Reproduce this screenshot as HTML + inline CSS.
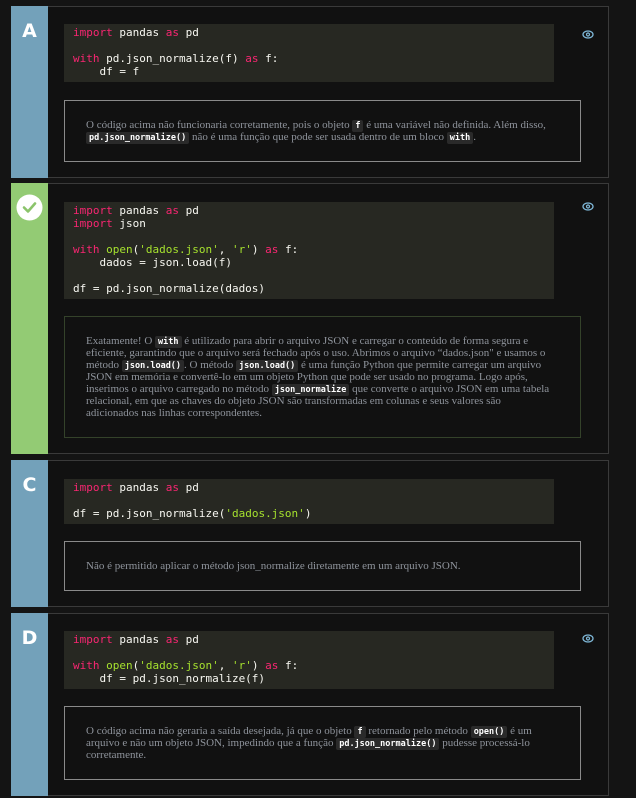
<!DOCTYPE html>
<html><head><meta charset="utf-8"><style>
*{margin:0;padding:0;box-sizing:border-box}
body{width:636px;height:798px;background:#141414;position:relative;overflow:hidden;font-family:"Liberation Serif",serif}
.card{position:absolute;left:11px;width:598px;background:#111;border:1px solid #3a3a3a}
.strip{position:absolute;left:-1px;top:-1px;bottom:-1px;width:37px;background:#73a1ba}
.letter{position:absolute;left:0;width:37px;top:14px;text-align:center;color:#fff;font:bold 19px "DejaVu Sans",sans-serif}
.code{position:absolute;left:52px;width:490px;background:#272822;padding:2px 9px;font:11px/13px "DejaVu Sans Mono","Liberation Mono",monospace;color:#f8f8f2;white-space:pre}
.k{color:#f92672}.s{color:#a6e22e}
.fb{position:absolute;left:52px;width:517px;border:1px solid #8a8a8a;display:flex;align-items:center;padding:0 21px;font-size:11px;line-height:12px;color:#8f949c}
.fb.g{border-color:#34422a;padding-right:30px}
code{font:bold 8.5px "DejaVu Sans Mono",monospace;color:#fff;background:#2a2a2a;padding:1px 3px;border-radius:2px}
.eye{position:absolute;left:570px;width:12px;height:9px}
</style></head><body>

<div class="card" style="top:6px;height:172px">
<div class="strip"><div class="letter">A</div></div>
<div class="code" style="top:17px;height:58px"><span class="k">import</span> pandas <span class="k">as</span> pd

<span class="k">with</span> pd.json_normalize(f) <span class="k">as</span> f:
    df = f</div>
<svg class="eye" style="top:23px" viewBox="0 0 12 9"><ellipse cx="6" cy="4.5" rx="5" ry="3.5" fill="none" stroke="#7fb8d8" stroke-width="1.3"/><circle cx="6" cy="4.5" r="1.5" fill="none" stroke="#7fb8d8" stroke-width="1.2"/></svg>
<div class="fb" style="top:93px;height:62px"><div>O código acima não funcionaria corretamente, pois o objeto <code>f</code> é uma variável não definida. Além disso, <code>pd.json_normalize()</code> não é uma função que pode ser usada dentro de um bloco <code>with</code>.</div></div>
</div>

<div class="card" style="top:183px;height:271px">
<div class="strip" style="background:#93cb74"><svg style="position:absolute;left:5px;top:11px" width="27" height="27" viewBox="0 0 27 27"><circle cx="13.5" cy="13.5" r="13" fill="#fff"/><path d="M8 13.5l4 4 7-8" fill="none" stroke="#8bc46b" stroke-width="2.6" stroke-linecap="round" stroke-linejoin="round"/></svg></div>
<div class="code" style="top:18px;height:97px"><span class="k">import</span> pandas <span class="k">as</span> pd
<span class="k">import</span> json

<span class="k">with</span> <span class="s">open</span>(<span class="s">'dados.json'</span>, <span class="s">'r'</span>) <span class="k">as</span> f:
    dados = json.load(f)

df = pd.json_normalize(dados)</div>
<svg class="eye" style="top:18px" viewBox="0 0 12 9"><ellipse cx="6" cy="4.5" rx="5" ry="3.5" fill="none" stroke="#7fb8d8" stroke-width="1.3"/><circle cx="6" cy="4.5" r="1.5" fill="none" stroke="#7fb8d8" stroke-width="1.2"/></svg>
<div class="fb g" style="top:132px;height:122px"><div>Exatamente! O <code>with</code> é utilizado para abrir o arquivo JSON e carregar o conteúdo de forma segura e eficiente, garantindo que o arquivo será fechado após o uso. Abrimos o arquivo “dados.json" e usamos o método <code>json.load()</code>. O método <code>json.load()</code> é uma função Python que permite carregar um arquivo JSON em memória e convertê-lo em um objeto Python que pode ser usado no programa. Logo após, inserimos o arquivo carregado no método <code>json_normalize</code> que converte o arquivo JSON em uma tabela relacional, em que as chaves do objeto JSON são transformadas em colunas e seus valores são adicionados nas linhas correspondentes.</div></div>
</div>

<div class="card" style="top:460px;height:147px">
<div class="strip"><div class="letter">C</div></div>
<div class="code" style="top:18px;height:45px"><span class="k">import</span> pandas <span class="k">as</span> pd

df = pd.json_normalize(<span class="s">'dados.json'</span>)</div>
<div class="fb" style="top:80px;height:50px"><div>Não é permitido aplicar o método json_normalize diretamente em um arquivo JSON.</div></div>
</div>

<div class="card" style="top:613px;height:183px">
<div class="strip"><div class="letter">D</div></div>
<div class="code" style="top:17px;height:58px"><span class="k">import</span> pandas <span class="k">as</span> pd

<span class="k">with</span> <span class="s">open</span>(<span class="s">'dados.json'</span>, <span class="s">'r'</span>) <span class="k">as</span> f:
    df = pd.json_normalize(f)</div>
<svg class="eye" style="top:20px" viewBox="0 0 12 9"><ellipse cx="6" cy="4.5" rx="5" ry="3.5" fill="none" stroke="#7fb8d8" stroke-width="1.3"/><circle cx="6" cy="4.5" r="1.5" fill="none" stroke="#7fb8d8" stroke-width="1.2"/></svg>
<div class="fb" style="top:92px;height:74px"><div>O código acima não geraria a saída desejada, já que o objeto <code>f</code> retornado pelo método <code>open()</code> é um arquivo e não um objeto JSON, impedindo que a função <code>pd.json_normalize()</code> pudesse processá-lo corretamente.</div></div>
</div>

</body></html>
